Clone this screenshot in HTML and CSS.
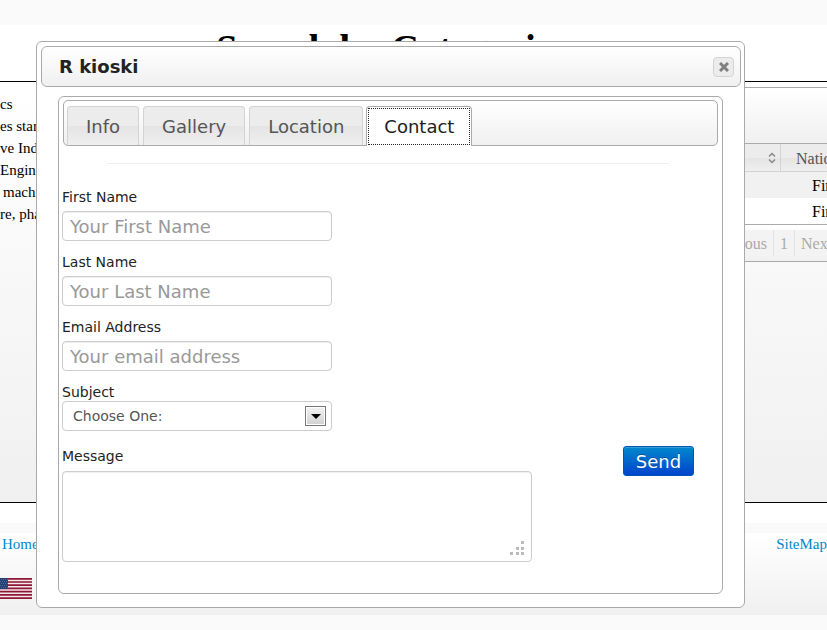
FILE: index.html
```html
<!DOCTYPE html>
<html lang="en">
<head>
<meta charset="utf-8">
<title>R kioski</title>
<link rel="stylesheet" href="styles.css">
</head>
<body>
<header class="page-header"><h1>Search by Categories</h1></header>
<main class="page-main">
  <div class="categories">
    <div>cs</div>
    <div>es star</div>
    <div>ve Ind</div>
    <div>Engine</div>
    <div class="wrapped">machi</div>
    <div>re, pha</div>
  </div>
  <section class="listing">
    <div class="listing-top"></div>
    <table>
      <thead><tr>
        <th><svg width="8" height="12" viewBox="0 0 8 12" fill="none" stroke="#888" stroke-width="1.5"><path d="M1 4.5 4 1.5 7 4.5M1 7.5 4 10.5 7 7.5"/></svg></th>
        <th class="nation">Natio</th>
      </tr></thead>
      <tbody>
        <tr><td></td><td>Fin</td></tr>
        <tr><td></td><td>Fin</td></tr>
      </tbody>
    </table>
    <nav class="pager"><div class="pages"><button class="prev" disabled>ious</button><button class="current" disabled>1</button><button disabled>Next</button></div></nav>
  </section>
</main>
<footer class="page-footer">
  <div class="links"><a href="#">Home</a><a href="#">SiteMap</a></div>
  <svg class="flag" width="32" height="21" viewBox="0 0 32 21">
    <rect width="32" height="21" fill="#f3e8ea"/>
    <path d="M0 .8h32M0 4h32M0 7.2h32M0 10.4h32M0 13.6h32M0 16.8h32M0 20.2h32" stroke="#8f1635" stroke-width="1.7"/>
    <rect width="8" height="11" fill="#233e70"/>
    <path d="M1 1.5h7M0 3.5h7M1 5.5h7M0 7.5h7M1 9.5h7" stroke="#4f6c9a" stroke-dasharray="1 1"/>
  </svg>
</footer>

<div class="dialog" role="dialog" aria-labelledby="dialog-title">
  <div class="titlebar">
    <h2 id="dialog-title">R kioski</h2>
    <button class="close" aria-label="Close"><svg width="10" height="10" viewBox="0 0 10 10" stroke="#808080" stroke-width="3"><path d="M1 1 9 9M9 1 1 9"/></svg></button>
  </div>
  <div class="panel">
    <nav class="tabs">
      <a href="#">Info</a><a href="#">Gallery</a><a href="#">Location</a><a href="#" class="active"><span>Contact</span></a>
    </nav>
    <hr>
    <form>
      <div class="field"><label for="first">First Name</label><input id="first" type="text" placeholder="Your First Name"></div>
      <div class="field"><label for="last">Last Name</label><input id="last" type="text" placeholder="Your Last Name"></div>
      <div class="field"><label for="email">Email Address</label><input id="email" type="email" placeholder="Your email address"></div>
      <div class="field subject"><label for="subject">Subject</label>
        <div class="select"><select id="subject"><option>Choose One:</option></select>
          <span class="arrow"><svg width="10" height="5" viewBox="0 0 10 5"><path d="M0 0h10L5 5z"/></svg></span></div>
      </div>
      <div class="message-row">
        <div class="message"><label for="message">Message</label>
          <div class="textarea"><textarea id="message"></textarea>
            <svg class="grip" width="15" height="15" viewBox="0 0 15 15" fill="#bbb"><path d="M11 0h3v3h-3zM6 6h3v3H6zM11 6h3v3h-3zM0 11h3v3H0zM6 11h3v3H6zM11 11h3v3h-3z"/></svg></div>
        </div>
        <button class="send" type="button">Send</button>
      </div>
    </form>
  </div>
</div>
</body>
</html>
```
FILE: styles.css
```css
* { box-sizing: border-box; }
body {
  margin: 0;
  min-height: 100vh;
  padding-top: 25px;
  overflow: hidden;
  background: #fafafa;
  color: #000;
  font: 16px/22px "Liberation Serif", "Times New Roman", serif;
}
.page-header { height: 56px; background: #fff; }
h1 { margin: 0; padding: 2px 0 0 216px; font-size: 39px; line-height: 44px; white-space: nowrap; }
.page-main {
  display: flex;
  justify-content: space-between;
  height: 422px;
  border: solid #000;
  border-width: 1px 0;
  background: linear-gradient(#fff, #f0f0f0);
}
.categories { padding-top: 11px; font-size: 15px; white-space: nowrap; }
.wrapped { padding-left: 3px; }
.listing { width: 90px; padding-top: 5px; overflow: hidden; }
.listing-top {
  height: 57px;
  border: solid #aaa;
  border-width: 1px 0;
  background: linear-gradient(#fff, #f0f0f0);
}
table { width: 100%; table-layout: fixed; border-collapse: separate; border-spacing: 0; background: #fff; }
th, td { padding: 2px 0 0; height: 26px; font-weight: 400; text-align: left; }
th {
  height: 28px;
  border-bottom: 1px solid #d3d3d3;
  background: linear-gradient(#ececec 50%, #e4e4e4 50%, #efefef);
  color: #555;
}
th:first-child { width: 44px; border-right: 1px solid #d3d3d3; padding: 0 0 0 31px; }
th svg { display: block; }
.nation { padding-left: 15px; }
td:last-child { padding-left: 31px; }
tbody tr:first-child { background: #f1f1f1; }
.pager {
  height: 38px;
  padding: 5px 0;
  border: solid #aaa;
  border-width: 1px 0;
  background: linear-gradient(#fff, #f0f0f0);
}
.pages { display: flex; }
.pages button {
  flex: none;
  height: 26px;
  padding: 2px 6px 0;
  border: 0;
  border-right: 1px solid #e3e3e3;
  background: #f3f3f3;
  color: #aaa;
  font: inherit;
}
.pages .prev { width: 37px; padding-left: 0; text-align: right; }
.page-footer {
  height: 92px;
  margin-top: 20px;
  border-top: 10px solid #fafafa;
  background: linear-gradient(#fff, #f0f0f0);
  box-shadow: 0 -20px #fff;
}
.links { display: flex; justify-content: space-between; padding-left: 2px; font-size: 15px; }
.links a { color: #08c; text-decoration: none; }
.flag { display: block; margin-top: 23px; }

.dialog {
  position: absolute;
  top: 41px;
  left: 36px;
  right: 82px;
  padding: 4px 3px 13px 4px;
  border: 1px solid #aaa;
  border-radius: 6px;
  background: #fff;
  color: #222;
  font-family: "DejaVu Sans", Verdana, sans-serif;
}
.titlebar {
  display: flex;
  align-items: center;
  justify-content: space-between;
  height: 41px;
  padding: 0 6px 0 17px;
  border: 1px solid #aaa;
  border-radius: 6px;
  background: linear-gradient(#fff, #f0f0f0);
}
h2 { margin: 0; font-size: 18px; line-height: 22px; }
.close {
  display: grid;
  place-items: center;
  width: 21px;
  height: 20px;
  padding: 0;
  border: 1px solid #d3d3d3;
  border-radius: 4px;
  background: #ececec;
}
.panel {
  margin: 9px 18px 0 17px;
  height: 498px;
  padding: 3px;
  border: 1px solid #aaa;
  border-radius: 6px;
}
.tabs {
  display: flex;
  gap: 4px;
  height: 46px;
  margin: 0 1px;
  padding: 5px 3px 0;
  border: 1px solid #aaa;
  border-radius: 5px;
  background: linear-gradient(#fff, #f0f0f0);
  font-size: 18px;
  line-height: 39px;
}
.tabs a {
  height: 39px;
  padding: 0 18px;
  border: 1px solid #d3d3d3;
  border-bottom: 0;
  border-radius: 4px 4px 0 0;
  background: linear-gradient(#ececec 50%, #e4e4e4 50%, #efefef);
  color: #555;
  text-decoration: none;
}
.tabs .active {
  height: 40px;
  margin-left: -1px;
  padding: 1px;
  border-color: #aaa;
  background: #fff;
  color: #212121;
}
.active span { display: block; height: 37px; padding: 0 15px; border: 1px dotted #222; line-height: 36px; }
hr { height: 1px; margin: 17px 50px 23px 45px; border: 0; background: #eee; }
form { font-size: 14px; line-height: 20px; }
.field { margin-bottom: 11px; }
label { display: block; margin-bottom: 4px; }
input, select, textarea {
  display: block;
  width: 270px;
  height: 30px;
  margin: 0;
  padding: 0 7px;
  border: 1px solid #ccc;
  border-radius: 4px;
  background: #fff;
  box-shadow: inset 0 1px 1px #0001;
  color: #555;
  font: 18px "DejaVu Sans", Verdana, sans-serif;
}
input::placeholder { color: #999; opacity: 1; }
.subject { margin-bottom: 15px; }
.subject label { margin-bottom: -1px; }
.select { position: relative; width: 270px; }
select { appearance: none; padding: 0 10px; box-shadow: none; font-size: 14px; }
.arrow {
  position: absolute;
  top: 5px;
  right: 6px;
  display: grid;
  place-items: center;
  width: 21px;
  height: 20px;
  border: 1px solid #777;
  background: linear-gradient(#f3f3f3, #d0d0d0);
  box-shadow: inset 0 0 0 1px #fff;
  pointer-events: none;
}
.message-row { display: flex; justify-content: space-between; align-items: flex-start; padding-right: 25px; }
.message label { margin-bottom: 5px; }
.textarea { position: relative; }
textarea { width: 470px; height: 91px; resize: none; }
.grip { position: absolute; right: 7px; bottom: 6px; }
.send {
  width: 71px;
  height: 30px;
  padding: 0;
  border: 1px solid #0055b3;
  border-radius: 3px;
  background: linear-gradient(#08c, #04c);
  box-shadow: inset 0 1px #fff3;
  color: #fff;
  font: 18px "DejaVu Sans", Verdana, sans-serif;
  text-shadow: 0 -1px #0004;
}
```
